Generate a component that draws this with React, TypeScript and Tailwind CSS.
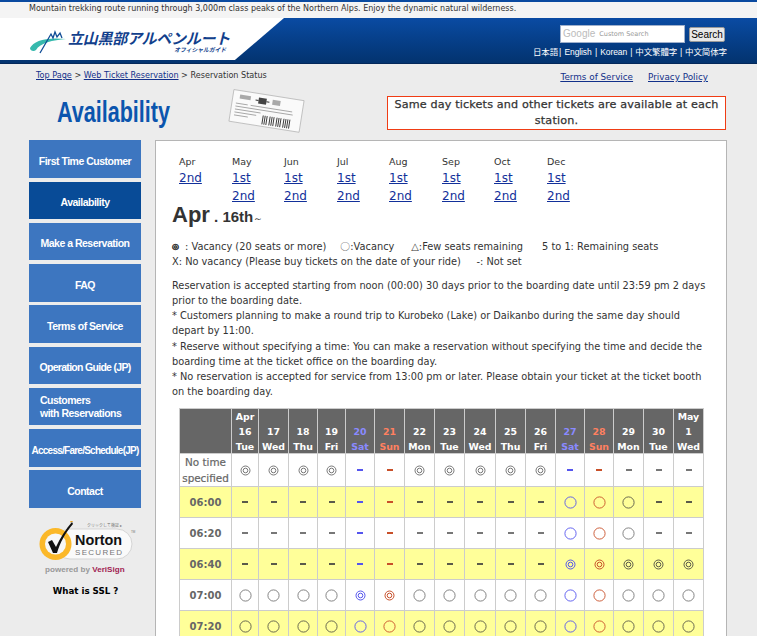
import React from "react";

const navItems: { label: React.ReactNode; cls: string; active?: boolean }[] = [
  { label: "First Time Customer", cls: "h-[38px] mb-1" },
  { label: "Availability", cls: "h-[37px] mb-1", active: true },
  { label: "Make a Reservation", cls: "h-[37px] mb-1" },
  { label: "FAQ", cls: "h-[38px] mb-[3px]" },
  { label: "Terms of Service", cls: "h-[38px] mb-1" },
  { label: <span className="tracking-[-0.7px]">Operation Guide (JP)</span>, cls: "h-[37px] mb-1" },
  { label: <span className="block w-full text-left pl-[11px] leading-[13px] -mt-[5px]">Customers<br />with Reservations</span>, cls: "h-[37px] mb-1" },
  { label: <span className="text-[10px] tracking-[-0.75px]">Access/Fare/Schedule(JP)</span>, cls: "h-[38px] mb-[3px]" },
  { label: "Contact", cls: "h-[38px]" },
];

const months = [
  { m: "Apr", l: ["2nd"], w: "w-[53px]" },
  { m: "May", l: ["1st", "2nd"], w: "w-[52px]" },
  { m: "Jun", l: ["1st", "2nd"], w: "w-[53px]" },
  { m: "Jul", l: ["1st", "2nd"], w: "w-[52px]" },
  { m: "Aug", l: ["1st", "2nd"], w: "w-[53px]" },
  { m: "Sep", l: ["1st", "2nd"], w: "w-[52px]" },
  { m: "Oct", l: ["1st", "2nd"], w: "w-[53px]" },
  { m: "Dec", l: ["1st", "2nd"], w: "w-[53px]" },
];

const widths = [52, 27, 30, 29, 28, 29, 30, 30, 30, 31, 30, 30, 29, 29, 30, 30, 30, 30];
const heads = [
  ["Apr", "16", "Tue"], ["", "17", "Wed"], ["", "18", "Thu"], ["", "19", "Fri"], ["", "20", "Sat"], ["", "21", "Sun"],
  ["", "22", "Mon"], ["", "23", "Tue"], ["", "24", "Wed"], ["", "25", "Thu"], ["", "26", "Fri"], ["", "27", "Sat"],
  ["", "28", "Sun"], ["", "29", "Mon"], ["", "30", "Tue"], ["May", "1", "Wed"],
];
const rows: { label: React.ReactNode; cells: string; h: string; yellow?: boolean }[] = [
  { label: <span className="font-normal text-[10.4px] leading-4 block [-webkit-text-stroke:0.2px_#666]">No time<br />specified</span>, cells: "DDDD--DDDDD-----", h: "h-[33px]" },
  { label: "06:00", cells: "-----------OOO--", h: "h-[31px]", yellow: true },
  { label: "06:20", cells: "-----------OOO--", h: "h-[31px]" },
  { label: "06:40", cells: "-----------DDDDD", h: "h-[31px]", yellow: true },
  { label: "07:00", cells: "OOOODDOOOOOOOOOO", h: "h-[31px]" },
  { label: "07:20", cells: "OOOOOOOOOOOOOOOO", h: "h-[31px]", yellow: true },
];

function colorFor(i: number, yellow?: boolean) {
  const sat = i === 4 || i === 11;
  const sun = i === 5 || i === 12;
  return sat ? "#5555ee" : sun ? "#c8502a" : yellow ? "#5a5a4a" : "#777777";
}

function Mark({ kind, color }: { kind: string; color: string }) {
  if (kind === "-") return <span className="inline-block w-[6px] h-[2px] align-middle" style={{ background: color }} />;
  if (kind === "O")
    return (
      <svg width="13" height="13" viewBox="0 0 13 13" className="inline-block align-middle">
        <circle cx="6.5" cy="6.5" r="5.6" fill="none" stroke={color} strokeWidth="0.9" />
      </svg>
    );
  return (
    <svg width="11" height="11" viewBox="0 0 11 11" className="inline-block align-middle">
      <circle cx="5.5" cy="5.5" r="4.5" fill="none" stroke={color} strokeWidth="1" />
      <circle cx="5.5" cy="5.5" r="2.3" fill="none" stroke={color} strokeWidth="1" />
    </svg>
  );
}

function Ticket() {
  return (
    <svg width="78" height="44" viewBox="0 0 78 44" className="block">
      <g transform="rotate(9 39 22)">
        <rect x="3" y="6" width="71" height="32" fill="#fafafa" stroke="#b0b0b0" strokeWidth="0.7" />
        <rect x="10" y="10" width="11" height="4" fill="#aaa" />
        <rect x="29" y="10" width="8" height="6" fill="#444" />
        <path d="M26 13h3M37 13h3" stroke="#333" />
        <rect x="43" y="10" width="8" height="5" fill="#aaa" />
        <path d="M7 19h12M22 19h42M7 22h58M7 25h26M7 28h22M7 31h14" stroke="#999" strokeWidth="0.8" />
        <g stroke="#333" strokeWidth="0.9">
          <path d="M36 27v9M38 27v9M40 27v9M43 27v9M45 27v9M47 27v9M50 27v9M52 27v9M54 27v9M57 27v9M59 27v9M61 27v9M63 27v9" />
        </g>
      </g>
    </svg>
  );
}

function Logo() {
  return (
    <div className="flex items-start">
      <svg width="38" height="24" viewBox="0 0 38 24" className="block mt-[4px]">
        <path d="M1 18C5 11 16 7 37 9 24 10 11 13 7 20 5 22 1 21 1 18Z" fill="#36b9ad" />
        <path d="M11 23 22 4 24 8 26 2 28 7 31 3 33 8" fill="none" stroke="#0f4c96" strokeWidth="1.3" />
      </svg>
      <div className="ml-[1px] flex flex-col items-end">
        <span className="font-['Noto_Sans_CJK_JP',sans-serif] font-bold italic text-[15px] leading-[16px] mt-[4px] text-[#123f8c] tracking-[-0.25px] whitespace-nowrap">立山黒部アルペンルート</span>
        <span className="font-['Noto_Sans_CJK_JP',sans-serif] font-bold italic text-[5.8px] leading-[8px] text-[#123f8c] mr-[4px] whitespace-nowrap">オフィシャルガイド</span>
      </div>
    </div>
  );
}

function Norton() {
  return (
    <div className="flex flex-col items-start pl-[9px]">
      <svg width="98" height="44" viewBox="0 0 98 44" className="block">
        <rect x="17" y="8" width="77" height="30" rx="15" fill="#fafafa" stroke="#d5d5d5" />
        <circle cx="17.5" cy="23" r="16" fill="#fbb829" />
        <circle cx="17.5" cy="23" r="10.5" fill="#f7f7f7" />
        <path d="M10 21 14 19 18 26C22 17 28 8 34 1L35 3C27 12 22 22 19 32L15 32Z" fill="#111" />
        <path d="M32 1l3-1" stroke="#e8a21c" strokeWidth="1" />
        <text x="37" y="24" fontFamily="Liberation Sans, sans-serif" fontWeight="700" fontSize="14.4" fill="#111">Norton</text>
        <text x="37" y="34" fontFamily="Liberation Sans, sans-serif" fontSize="8" letterSpacing="1.3" fill="#777">SECURED</text>
        <text x="49" y="5.5" fontFamily="Noto Sans CJK JP, sans-serif" fontSize="4" fill="#777">クリックして検証 ▸</text>
        <text x="93" y="12" fontFamily="Liberation Sans, sans-serif" fontSize="3" fill="#777">TM</text>
      </svg>
      <div className="font-['Liberation_Sans',sans-serif] font-bold text-[8.1px] leading-[10px] text-[#999] ml-[7px] whitespace-nowrap">
        powered by <span className="text-[#a11d52]">VeriSign</span>
      </div>
    </div>
  );
}

export default function App() {
  return (
    <div className="w-[757px] h-[636px] overflow-hidden bg-[#ececec] text-[#333] font-['DejaVu_Sans',Verdana,sans-serif] flex flex-col">
      {/* top strip */}
      <div className="h-[18px] border-t-2 border-[#0a4aa0] bg-[#f4f4f4] pl-[29px] text-[8px] leading-[14px] text-[#333] whitespace-nowrap shrink-0">
        Mountain trekking route running through 3,000m class peaks of the Northern Alps. Enjoy the dynamic natural wilderness.
      </div>

      {/* header */}
      <div className="relative h-[46px] shrink-0 bg-gradient-to-b from-[#0a4ba3] to-[#03336f] border-b border-[#03285a] overflow-hidden flex justify-between">
        <div className="absolute left-0 top-0 h-[42px] w-[284px] bg-white [clip-path:polygon(0_0,100%_0,82.7%_100%,0_100%)]" />
        <div className="relative pl-[29px] pt-[8px]"><Logo /></div>
        <div className="relative pr-[30px] flex flex-col items-end">
          <div className="flex items-center mt-[7px] mr-[2px]">
            <div className="w-[125px] h-[18px] bg-white border border-[#9fb0cc] flex items-center pl-[2px] leading-none whitespace-nowrap">
              <span className="font-['Liberation_Sans',sans-serif] text-[10px] text-[#bbb]">Google</span>
              <span className="text-[6.5px] text-[#999] ml-[4px] font-['DejaVu_Sans',sans-serif]">Custom Search</span>
            </div>
            <div className="ml-[4px] w-[36px] h-[15px] bg-[#e8e8e8] border border-[#999] rounded-[2px] text-[10px] leading-[13px] text-black text-center font-['Liberation_Sans',sans-serif]">Search</div>
          </div>
          <div className="mt-[3px] text-[8.5px] leading-[11px] text-white whitespace-nowrap font-['Liberation_Sans','Noto_Sans_CJK_JP',sans-serif] tracking-[-0.1px]">
            <span className="font-['Noto_Sans_CJK_JP',sans-serif]">日本語</span>
            <span className="mx-[1px]">|</span> English <span className="mx-[1px]">|</span> Korean <span className="mx-[1px]">|</span>
            <span className="font-['Noto_Sans_CJK_TC',sans-serif]"> 中文繁體字 </span><span className="mx-[1px]">|</span>
            <span className="font-['Noto_Sans_CJK_SC',sans-serif]"> 中文简体字</span>
          </div>
        </div>
      </div>

      {/* crumbs row */}
      <div className="flex justify-between pl-[36px] pr-[49px] pt-[4px] h-[31px] text-[8.1px] leading-[14px] shrink-0">
        <div>
          <a className="underline text-[#12308a]">Top Page</a> &gt; <a className="underline text-[#12308a]">Web Ticket Reservation</a> &gt; Reservation Status
        </div>
        <div className="flex gap-[15px] text-[8.8px] pt-[2px] text-[#12308a] underline">
          <a>Terms of Service</a>
          <a>Privacy Policy</a>
        </div>
      </div>

      {/* heading */}
      <div className="flex h-[45px] shrink-0 relative">
        <div className="ml-[57px] w-[113px] h-[38px] -mt-[2px]">
          <span className="block origin-left scale-x-[0.743] whitespace-nowrap font-['Liberation_Sans',sans-serif] font-bold text-[29px] leading-[38px] text-[#0b55ae]">Availability</span>
        </div>
        <div className="ml-[58px] -mt-[6px]"><Ticket /></div>
        <div className="ml-[81px] w-[339px] h-[34px] mt-[1px] bg-white border border-[#f03c14] text-center text-[11.2px] leading-4 tracking-[0.15px] text-[#333] [-webkit-text-stroke:0.25px_#333]">
          Same day tickets and other tickets are available at each station.
        </div>
      </div>

      {/* main */}
      <div className="flex flex-1 min-h-0">
        <div className="w-[112px] ml-[29px] shrink-0 flex flex-col">
          {navItems.map((n, i) => (
            <div key={i} className={`${n.cls} ${n.active ? "bg-[#084b97]" : "bg-[#3d76c0]"} flex items-center justify-center pt-[5px] text-white font-['Liberation_Sans',sans-serif] font-bold text-[10.5px] tracking-[-0.5px] whitespace-nowrap shrink-0`}>
              {n.label}
            </div>
          ))}
          <div className="mt-[13px]"><Norton /></div>
          <div className="mt-[11px] leading-[10px] text-center text-[8.7px] font-bold text-black ml-[1px]">What is SSL ?</div>
        </div>

        <div className="ml-[14px] w-[572px] shrink-0 bg-white border-l border-t border-r border-[#b5b5b5] pl-[16px] pr-[22px] pt-[14px]">
          {/* month links */}
          <div className="flex pl-[7px]">
            {months.map((m) => (
              <div key={m.m} className={`${m.w} shrink-0`}>
                <div className="text-[9.5px] leading-[14px] text-[#333]">{m.m}</div>
                {m.l.map((x) => (
                  <div key={x} className="text-[12px] leading-[18px] text-[#12309a] underline">{x}</div>
                ))}
              </div>
            ))}
          </div>
          <div className="font-['Liberation_Sans',sans-serif] font-bold leading-[26px] text-[#333] h-[26px] -mt-[3px] whitespace-nowrap">
            <span className="text-[22px]">Apr</span>
            <span className="text-[15px]"> . 16th</span>
            <span className="text-[10px] font-normal">～</span>
          </div>
          <div className="mt-[11px] text-[9.8px] leading-[15px] whitespace-nowrap">
            <div className="flex">
              <span className="mr-[3px] text-[8px] [-webkit-text-stroke:0.6px_#333]">◎</span><span>&nbsp;: Vacancy (20 seats or more)</span>
              <span className="ml-[14px]">〇:Vacancy</span>
              <span className="ml-[17px]">△:Few seats remaining</span>
              <span className="ml-[19px]">5 to 1: Remaining seats</span>
            </div>
            <div>X: No vacancy (Please buy tickets on the date of your ride)&nbsp;&nbsp;&nbsp;&nbsp;&nbsp;-: Not set</div>
          </div>
          <div className="mt-[9px] -mr-[4px] text-[9.8px] leading-[15.15px]">
            Reservation is accepted starting from noon (00:00) 30 days prior to the boarding date until 23:59 pm 2 days prior to the boarding date.
            <br />* Customers planning to make a round trip to Kurobeko (Lake) or Daikanbo during the same day should depart by 11:00.
            <br />* Reserve without specifying a time: You can make a reservation without specifying the time and decide the boarding time at the ticket office on the boarding day.
            <br />* No reservation is accepted for service from 13:00 pm or later. Please obtain your ticket at the ticket booth on the boarding day.
          </div>

          {/* table */}
          <table className="mt-[9px] ml-[7px] border-collapse table-fixed w-[525px] text-[10px] font-bold text-[#666]">
            <colgroup>
              {widths.map((w, i) => <col key={i} style={{ width: w }} />)}
            </colgroup>
            <thead>
              <tr className="h-[45px]">
                <th className="border border-[#ccc] bg-[#666]" />
                {heads.map((h, i) => (
                  <th key={i} className={`border border-[#ccc] bg-[#666] p-0 text-center text-[9.4px] leading-[15px] font-bold ${i === 4 || i === 11 ? "text-[#8a8aff]" : i === 5 || i === 12 ? "text-[#ff8060]" : "text-white"}`}>
                    <div className="h-[15px]">{h[0] || "\u00a0"}</div>
                    <div className="h-[15px]">{h[1]}</div>
                    <div className="h-[14px]">{h[2]}</div>
                  </th>
                ))}
              </tr>
            </thead>
            <tbody>
              {rows.map((r, ri) => (
                <tr key={ri} className={r.h}>
                  <td className={`border border-[#ccc] p-0 text-center ${r.yellow ? "bg-[#ffff99]" : "bg-white"}`}>{r.label}</td>
                  {r.cells.split("").map((c, i) => (
                    <td key={i} className={`border border-[#ccc] p-0 text-center leading-none ${r.yellow ? "bg-[#ffff99]" : "bg-white"}`}>
                      <Mark kind={c} color={colorFor(i, r.yellow)} />
                    </td>
                  ))}
                </tr>
              ))}
            </tbody>
          </table>
        </div>
      </div>
    </div>
  );
}
